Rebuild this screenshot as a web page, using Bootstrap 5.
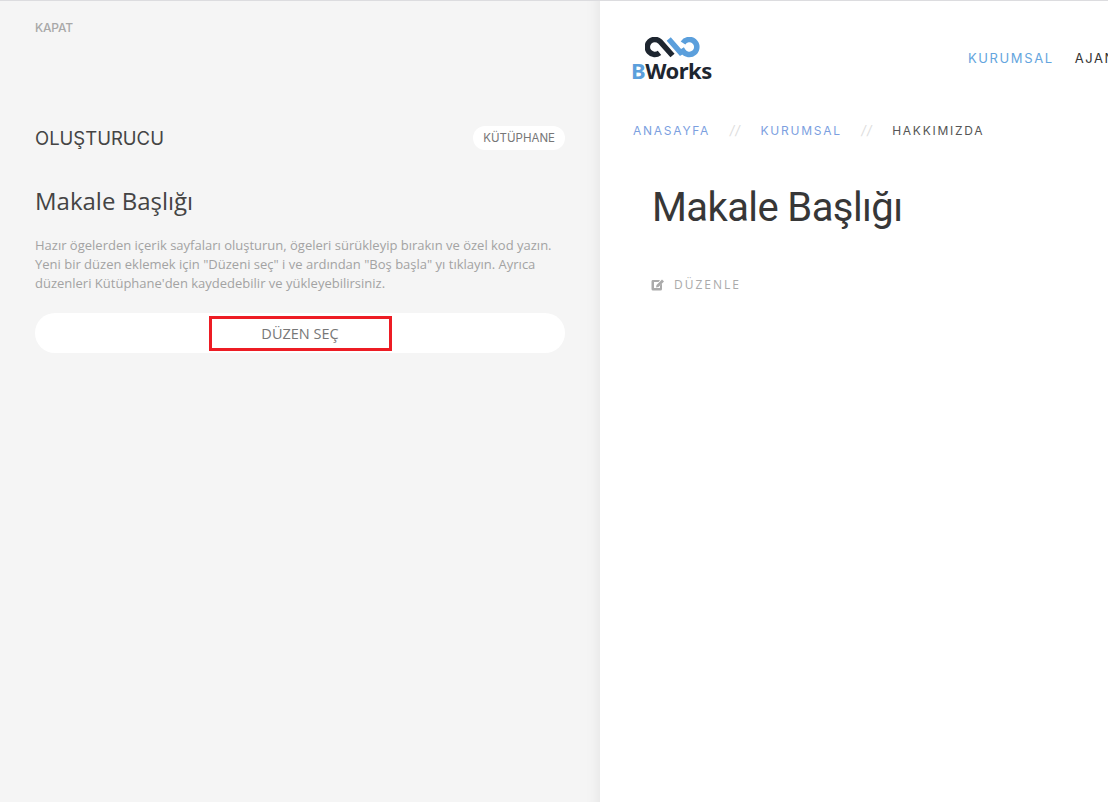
<!DOCTYPE html>
<html lang="tr">
<head>
  <meta charset="UTF-8" />
  <meta name="viewport" content="width=device-width, initial-scale=1.0" />
  <title>Makale Başlığı</title>
  <link rel="stylesheet" href="https://cdn.jsdelivr.net/npm/bootstrap@5.3.0/dist/css/bootstrap.min.css"/>
  <style>
    html, body { height: 100%; }
    body {
      height: 802px;
      overflow: hidden;
      background: #fff;
      font-family: "Open Sans", sans-serif;
      border-top: 1px solid #dcdcdf;
    }
    .builder-side {
      width: 600px;
      flex: none;
      height: 801px;
      background: #f5f5f5;
      padding: 20px 35px 0;
      box-shadow: inset -16px 0 14px -14px rgba(0, 0, 0, .07);
    }
    .close-link {
      font-family: Inter, sans-serif;
      font-size: 12px;
      font-weight: 500;
      letter-spacing: -.2px;
      line-height: 14px;
      color: #a8a8a8;
      text-decoration: none;
      display: block;
    }
    .builder-head { margin-top: 86px; height: 34px; }
    .builder-title {
      font-family: Inter, sans-serif;
      font-size: 18.5px;
      font-weight: 400;
      color: #444;
      margin: 0;
    }
    .library-pill {
      font-family: Inter, sans-serif;
      font-size: 11.5px;
      color: #777;
      background: #fff;
      border-radius: 12px;
      padding: 0 10px;
      line-height: 24px;
      text-decoration: none;
    }
    .article-name {
      font-size: 24px;
      font-weight: 400;
      color: #444;
      line-height: 33px;
      margin: 29px 0 0;
    }
    .builder-text {
      font-size: 13px;
      line-height: 19px;
      color: #a3a3a3;
      margin: 19px 0 0;
    }
    .layout-bar {
      margin-top: 20px;
      height: 40px;
      background: #fff;
      border-radius: 20px;
      padding-top: 3px;
    }
    .layout-pick {
      width: 183px;
      height: 35px;
      border: 3px solid #ed1c24;
      font-size: 14.5px;
      color: #777;
      text-decoration: none;
    }
    .site-side { flex: 1 1 0; min-width: 0; overflow: hidden; height: 801px; }
    .site-head { padding: 36px 0 0 31px; height: 100px; }
    .brand-mark { width: 84px; flex: none; text-decoration: none; }
    .brand-mark svg { display: block; margin-left: 14px; }
    .brand-name {
      display: block;
      font-family: "Noto Sans", sans-serif;
      font-weight: 700;
      font-size: 22px;
      line-height: 22px;
      letter-spacing: -.5px;
      color: #1e2630;
      margin-top: 0;
    }
    .brand-name b { color: #5b9fdc; font-weight: 700; }
    .site-menu {
      margin-left: 253px;
      margin-top: 11px;
      gap: 21px;
      white-space: nowrap;
      flex: none;
      font-family: Inter, sans-serif;
      font-size: 13px;
      letter-spacing: 1.6px;
      line-height: 20px;
    }
    .site-menu a { color: #333; text-decoration: none; }
    .site-menu a.is-current { color: #64a5de; }
    .crumbs {
      padding: 0 0 0 33px;
      margin-top: 19px;
      font-family: Inter, sans-serif;
      font-size: 12px;
      letter-spacing: 1.75px;
      line-height: 20px;
      white-space: nowrap;
      color: #555;
    }
    .crumbs a { color: #7c9fdf; text-decoration: none; }
    .crumbs i { color: #ddd; font-size: 13px; margin: 0 19.5px; letter-spacing: 1px; }
    .page-name {
      font-family: Roboto, sans-serif;
      font-size: 40px;
      font-weight: 400;
      letter-spacing: -.6px;
      line-height: 50px;
      color: #373737;
      margin: 42px 0 0 52px;
    }
    .edit-link {
      margin: 43px 0 0 51px;
      font-size: 12px;
      letter-spacing: 2px;
      line-height: 18px;
      color: #aaa;
      text-decoration: none;
      gap: 10px;
    }
  </style>
</head>
<body>

<div class="d-flex">
  <aside class="builder-side">
    <a href="#" class="close-link">KAPAT</a>

    <div class="builder-head d-flex justify-content-between align-items-center">
      <h2 class="builder-title">OLUŞTURUCU</h2>
      <a href="#" class="library-pill">KÜTÜPHANE</a>
    </div>

    <h3 class="article-name">Makale Başlığı</h3>
    <p class="builder-text">Hazır ögelerden içerik sayfaları oluşturun, ögeleri sürükleyip bırakın ve özel kod yazın. Yeni bir düzen eklemek için "Düzeni seç" i ve ardından "Boş başla" yı tıklayın. Ayrıca düzenleri Kütüphane'den kaydedebilir ve yükleyebilirsiniz.</p>

    <div class="layout-bar d-flex justify-content-center align-items-start">
      <a href="#" class="layout-pick d-flex align-items-center justify-content-center">DÜZEN SEÇ</a>
    </div>
  </aside>

  <main class="site-side">
    <div class="site-head d-flex align-items-start">
      <a href="#" class="brand-mark">
        <svg width="55" height="22" viewBox="0 0 55 22" fill="none" stroke-width="5.5">
          <path d="M14.500 15.800 A7.500 7.500 0 1 1 15 4.500 L27.500 18.500" stroke="#1e2630"/>
          <path d="M23.700 2 L35.500 15.500 L38 14 A7.500 7.500 0 1 0 38 6" stroke="#5b9fdc"/>
        </svg>
        <span class="brand-name"><b>B</b>Works</span>
      </a>
      <nav class="site-menu d-flex">
        <a href="#" class="is-current">KURUMSAL</a>
        <a href="#">AJANS</a>
      </nav>
    </div>

    <div class="crumbs">
      <a href="#">ANASAYFA</a><i>//</i><a href="#">KURUMSAL</a><i>//</i><span>HAKKIMIZDA</span>
    </div>

    <h1 class="page-name">Makale Başlığı</h1>

    <a href="#" class="edit-link d-inline-flex align-items-center">
      <svg width="13" height="12" viewBox="0 0 13 12" fill="#aaa">
        <path d="M1.500 1 H9 L7.500 3 H3 V9 H9 V6.500 L11 4.500 V10 Q11 11.500 9.500 11.500 H2 Q.5 11.500 .5 10 V2.500 Q.5 1 1.500 1 Z"/>
        <path d="M11 .5 L13 2.500 L7.500 8 L5 8.500 L5.500 6 Z"/>
      </svg>
      DÜZENLE
    </a>
  </main>
</div>

<script src="https://cdn.jsdelivr.net/npm/bootstrap@5.3.0/dist/js/bootstrap.bundle.min.js"></script>
</body>
</html>
